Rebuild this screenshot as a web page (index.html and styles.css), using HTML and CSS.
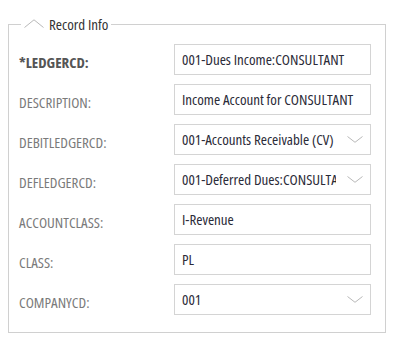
FILE: index.html
```html
<!DOCTYPE html>
<html lang="en">
<head>
    <meta charset="UTF-8">
    <title>Record Info</title>
    <link rel="stylesheet" href="styles.css">
</head>
<body>
    <fieldset class="record-box">
        <legend class="record-legend">
            <svg class="collapse-icon" width="20" height="9" viewBox="0 0 20 9">
                <polyline points="0.5,8.5 10,0.8 19.5,8.5" fill="none" stroke="#b8b8b8" stroke-width="1"/>
            </svg>
            <span>Record Info</span>
        </legend>

        <div class="form-grid">
            <label class="lbl required">*LEDGERCD:</label>
            <div class="field">001-Dues Income:CONSULTANT</div>

            <label class="lbl">DESCRIPTION:</label>
            <div class="field">Income Account for CONSULTANT</div>

            <label class="lbl">DEBITLEDGERCD:</label>
            <div class="field select">
                <span class="val">001-Accounts Receivable (CV)</span>
                <svg class="arrow" width="16" height="7" viewBox="0 0 16 7"><polyline points="0.5,0.5 8,6.3 15.5,0.5" fill="none" stroke="#b8b8b8"/></svg>
            </div>

            <label class="lbl">DEFLEDGERCD:</label>
            <div class="field select">
                <span class="val">001-Deferred Dues:CONSULTANT</span>
                <svg class="arrow" width="16" height="7" viewBox="0 0 16 7"><polyline points="0.5,0.5 8,6.3 15.5,0.5" fill="none" stroke="#b8b8b8"/></svg>
            </div>

            <label class="lbl">ACCOUNTCLASS:</label>
            <div class="field">I-Revenue</div>

            <label class="lbl">CLASS:</label>
            <div class="field">PL</div>

            <label class="lbl">COMPANYCD:</label>
            <div class="field select">
                <span class="val">001</span>
                <svg class="arrow" width="16" height="7" viewBox="0 0 16 7"><polyline points="0.5,0.5 8,6.3 15.5,0.5" fill="none" stroke="#b8b8b8"/></svg>
            </div>
        </div>
    </fieldset>
</body>
</html>
```

FILE: styles.css
```css
body {
    margin: 17px 8px 8px;
    background-color: #fff;
    font-family: "Open Sans", "Noto Sans", sans-serif;
    font-stretch: 75%;
    font-size: 15px;
    color: #333;
}
.record-box {
    width: 378px;
    box-sizing: border-box;
    margin: 0;
    padding: 13px 14px 17px 10px;
    border: 1px solid #d0d0d0;
}
.record-legend {
    display: flex;
    align-items: center;
    height: 14px;
    margin-left: 2px;
    padding: 0 3px;
    color: #333;
    font-size: 15px;
}
.collapse-icon {
    margin-right: 5px;
    margin-top: -1px;
}
.form-grid {
    display: grid;
    grid-template-columns: 155px 197px;
    row-gap: 9px;
    align-items: center;
}
.lbl {
    padding-top: 4px;
    color: #7a7a7a;
}
.lbl.required {
    color: #555;
    font-weight: bold;
}
.field {
    height: 31px;
    box-sizing: border-box;
    border: 1px solid #d4d4d4;
    padding: 0 7px;
    line-height: 29px;
    color: #2b2b38;
    white-space: nowrap;
    overflow: hidden;
}
.select {
    display: flex;
    align-items: center;
    padding-right: 7px;
}
.select .val {
    flex: 1;
    overflow: hidden;
    white-space: nowrap;
}
.arrow {
    margin-left: 11px;
    flex-shrink: 0;
}
```
